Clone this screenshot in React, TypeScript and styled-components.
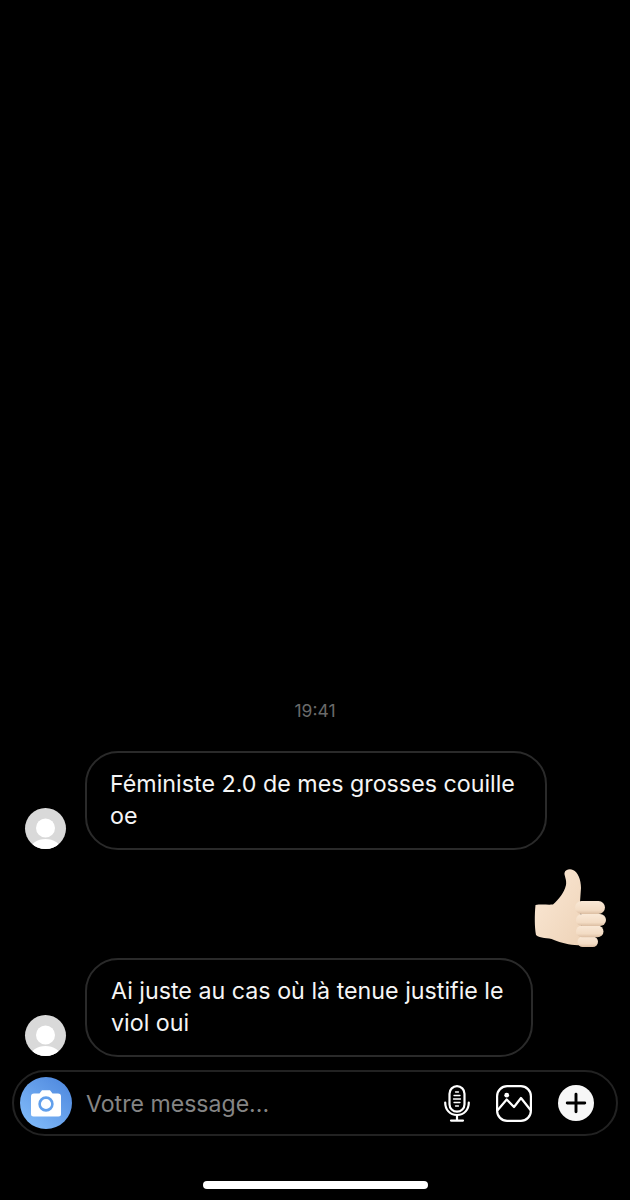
import React from 'react';
import styled, { createGlobalStyle } from 'styled-components';

const GlobalStyle = createGlobalStyle`
	html, body {
		margin: 0;
		padding: 0;
		background: #000;
	}
	* {
		box-sizing: border-box;
	}
`;

const Screen = styled.div`
	width: 630px;
	height: 1200px;
	background: #000;
	color: #fff;
	font-family: Inter, 'Liberation Sans', sans-serif;
	display: flex;
	flex-direction: column;
	justify-content: flex-end;
	overflow: hidden;
`;

const Thread = styled.div`
	display: flex;
	flex-direction: column;
	padding: 0 22px 13px 25px;
`;

const Time = styled.div`
	text-align: center;
	font-size: 17.5px;
	line-height: 20px;
	color: #6a6a6a;
	margin-bottom: 30px;
	padding-right: 3px;
`;

const Row = styled.div`
	display: flex;
	align-items: flex-end;
	gap: 19px;
`;

const Avatar = styled.div`
	width: 41px;
	height: 41px;
	border-radius: 50%;
	background: #d9d9d9;
	overflow: hidden;
	flex: none;
	margin-bottom: 1px;
`;

const Bubble = styled.div<{ $width: number; $inset: number }>`
	width: ${(p) => p.$width}px;
	height: 99px;
	border: 2px solid #2a2a2a;
	border-radius: 33px;
	padding: 15px 0 0 ${(p) => p.$inset}px;
	font-size: 23.25px;
	line-height: 32px;
	color: #f5f5f5;
`;

const Reaction = styled.div`
	display: flex;
	justify-content: flex-end;
	align-items: flex-start;
	margin: 3px 0 0;
	padding-top: 15px;
	height: 105px;
`;

const Composer = styled.div`
	margin: 0 12px;
	height: 66px;
	border: 2px solid #222;
	border-radius: 33px;
	display: flex;
	align-items: center;
	padding: 0 22px 0 6px;
`;

const CameraButton = styled.div`
	width: 52px;
	height: 52px;
	border-radius: 50%;
	background: linear-gradient(40deg, #86c0fc 0%, #4a84dc 100%);
	display: flex;
	align-items: center;
	justify-content: center;
	flex: none;
`;

const Placeholder = styled.div`
	flex: 1;
	margin-left: 14px;
	padding-top: 1px;
	font-size: 23.1px;
	color: #858585;
`;

const Tools = styled.div`
	display: flex;
	align-items: center;
	gap: 26px;
`;

const HomeBarArea = styled.div`
	height: 64px;
	padding-top: 45px;
	display: flex;
	justify-content: center;
`;

const HomeBar = styled.div`
	width: 225px;
	height: 8px;
	border-radius: 4px;
	background: #fff;
`;

const AvatarIcon = () => (
	<svg width="41" height="41" viewBox="0 0 41 41">
		<circle cx="20.5" cy="20" r="9.5" fill="#fff" />
		<ellipse cx="20.5" cy="41" rx="15" ry="10" fill="#fff" />
	</svg>
);

const CameraIcon = () => (
	<svg width="32" height="28" viewBox="0 0 32 28">
		<path
			d="M4 4.500h5.500L12 1.200h8l2.500 3.300H28a3 3 0 0 1 3 3V25a2.500 2.500 0 0 1-2.500 2.500h-25A2.500 2.500 0 0 1 1 25V7.500a3 3 0 0 1 3-3z"
			fill="#fff"
		/>
		<circle cx="16" cy="15" r="6.400" fill="none" stroke="#62a0ec" strokeWidth="2.600" />
	</svg>
);

const MicIcon = () => (
	<svg width="26" height="37" viewBox="0 0 26 37" fill="none" stroke="#fff" strokeWidth="2.200" strokeLinecap="round">
		<rect x="5.500" y="1.200" width="15" height="25.500" rx="7.500" />
		<path d="M1.200 17.500c0 7 4.500 12.500 11.800 12.500s11.800-5.500 11.800-12.500" />
		<path d="M13 30v5M7 35.600h12" />
		<path d="M11.500 7h3M10 10.500h6M9.500 14h7M10 17.500h6M11.500 21h3" strokeWidth="1.300" />
	</svg>
);

const ImageIcon = () => (
	<svg width="36" height="37" viewBox="0 0 36 37" fill="none" stroke="#fff" strokeWidth="2.200" strokeLinejoin="round" strokeLinecap="round">
		<rect x="1.100" y="1.200" width="33.800" height="34.600" rx="10" />
		<circle cx="10.700" cy="10.200" r="2.400" fill="#fff" stroke="none" />
		<path d="M1.800 25l8.900-10.500 7.300 7.500 7-9 9.500 12" />
	</svg>
);

const PlusIcon = () => (
	<svg width="36" height="36" viewBox="0 0 37 37">
		<circle cx="18.500" cy="18.500" r="18.500" fill="#f7f7f7" />
		<path d="M18.500 9.500v18M9.500 18.500h18" stroke="#000" strokeWidth="3" strokeLinecap="round" />
	</svg>
);

const ThumbsUp = () => (
	<svg width="74" height="80" viewBox="24 13 74 80">
		<defs>
			<linearGradient id="skin" x1="0" y1="0" x2="1" y2="1">
				<stop offset="0" stopColor="#fbe9d6" />
				<stop offset="1" stopColor="#eed3b8" />
			</linearGradient>
			<linearGradient id="finger" x1="0" y1="0" x2="0" y2="1">
				<stop offset="0" stopColor="#f9e8d6" />
				<stop offset="0.7" stopColor="#f3dcc4" />
				<stop offset="1" stopColor="#dcbea2" />
			</linearGradient>
			<filter id="soft" x="-5%" y="-5%" width="110%" height="110%">
				<feGaussianBlur stdDeviation="0.5" />
			</filter>
		</defs>
		<g filter="url(#soft)">
			<path
				d="M25.500 50C31 49 38 50 43 49.500C49 44 54 38 56 30C57 25 54 20 54.500 18C55 14.500 60 13.500 63 15C68 17 71 25 71 33L70 47L72 90C62 91 52 88 44 85C38 82 30 84 26 80C24.500 72 24.500 60 25.500 50Z"
				fill="url(#skin)"
			/>
			<rect x="67.500" y="81.500" width="20.500" height="10.500" rx="5.200" fill="url(#finger)" />
			<rect x="66" y="70.500" width="27.500" height="11.800" rx="5.900" fill="url(#finger)" />
			<rect x="66" y="59" width="30" height="12" rx="6" fill="url(#finger)" />
			<rect x="65" y="46" width="30" height="13" rx="6.500" fill="url(#finger)" />
		</g>
	</svg>
);

export default function App() {
	return (
		<Screen>
			<GlobalStyle />
			<Thread>
				<Time>19:41</Time>
				<Row>
					<Avatar>
						<AvatarIcon />
					</Avatar>
					<Bubble $width={462} $inset={23}>
						Féministe 2.0 de mes grosses couille
						<br />
						oe
					</Bubble>
				</Row>
				<Reaction>
					<ThumbsUp />
				</Reaction>
				<Row>
					<Avatar>
						<AvatarIcon />
					</Avatar>
					<Bubble $width={448} $inset={24}>
						Ai juste au cas où là tenue justifie le
						<br />
						viol oui
					</Bubble>
				</Row>
			</Thread>
			<Composer>
				<CameraButton>
					<CameraIcon />
				</CameraButton>
				<Placeholder>Votre message...</Placeholder>
				<Tools>
					<MicIcon />
					<ImageIcon />
					<PlusIcon />
				</Tools>
			</Composer>
			<HomeBarArea>
				<HomeBar />
			</HomeBarArea>
		</Screen>
	);
}
